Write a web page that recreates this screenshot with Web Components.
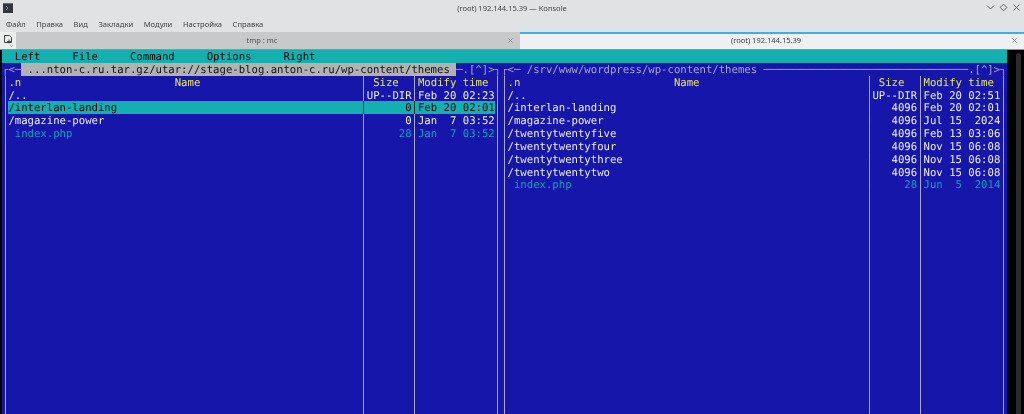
<!DOCTYPE html>
<html lang="ru">
<head>
<meta charset="utf-8">
<title>Konsole</title>
<style>
  html, body { margin: 0; padding: 0; background: #000; }
</style>
</head>
<body>
<kde-window>
  <kde-titlebar>(root) 192.144.15.39 — Konsole</kde-titlebar>
  <kde-menubar>
    <span>Файл</span><span>Правка</span><span>Вид</span><span>Закладки</span><span>Модули</span><span>Настройка</span><span>Справка</span>
  </kde-menubar>
  <kde-tabbar>
    <kde-tab>tmp : mc</kde-tab>
    <kde-tab active>(root) 192.144.15.39</kde-tab>
  </kde-tabbar>
  <mc-terminal>
    <mc-menu></mc-menu>
    <mc-panel cols="55" active>
      <span slot="path"> ...nton-c.ru.tar.gz/utar://stage-blog.anton-c.ru/wp-content/themes </span>
      <mc-row header name=".n                        Name" size=" Size" time="Modify time"></mc-row>
      <mc-row name="/.." size="UP--DIR" time="Feb 20 02:23"></mc-row>
      <mc-row selected name="/interlan-landing" size="0" time="Feb 20 02:01"></mc-row>
      <mc-row name="/magazine-power" size="0" time="Jan  7 03:52"></mc-row>
      <mc-row link name=" index.php" size="28" time="Jan  7 03:52"></mc-row>
      <mc-row filler></mc-row>
    </mc-panel>
    <mc-panel cols="56">
      <span slot="path"> /srv/www/wordpress/wp-content/themes </span>
      <mc-row header name=".n                        Name" size=" Size" time="Modify time"></mc-row>
      <mc-row name="/.." size="UP--DIR" time="Feb 20 02:51"></mc-row>
      <mc-row name="/interlan-landing" size="4096" time="Feb 20 02:01"></mc-row>
      <mc-row name="/magazine-power" size="4096" time="Jul 15  2024"></mc-row>
      <mc-row name="/twentytwentyfive" size="4096" time="Feb 13 03:06"></mc-row>
      <mc-row name="/twentytwentyfour" size="4096" time="Nov 15 06:08"></mc-row>
      <mc-row name="/twentytwentythree" size="4096" time="Nov 15 06:08"></mc-row>
      <mc-row name="/twentytwentytwo" size="4096" time="Nov 15 06:08"></mc-row>
      <mc-row link name=" index.php" size="28" time="Jun  5  2014"></mc-row>
      <mc-row filler></mc-row>
    </mc-panel>
  </mc-terminal>
</kde-window>

<script>
class KdeWindow extends HTMLElement {
  constructor() {
    super();
    this.attachShadow({ mode: "open" });
    this.shadowRoot.innerHTML = `
      <style>
        :host {
          display: flex;
          flex-direction: column;
          width: 1024px;
          height: 414px;
          overflow: hidden;
          background: #e1e2e4;
          font-family: "Noto Sans", sans-serif;
          color: #404346;
          filter: blur(0.3px); /* the reference is a scaled down capture */
        }
      </style>
      <slot></slot>
    `;
  }
}

class KdeTitlebar extends HTMLElement {
  constructor() {
    super();
    this.attachShadow({ mode: "open" });
    this.shadowRoot.innerHTML = `
      <style>
        :host {
          display: grid;
          grid-template-columns: 1fr auto 1fr;
          align-items: center;
          height: 15px;
          padding: 0 3px;
          font-size: 7.5px;
        }
        .controls { display: flex; gap: 4px; justify-self: end; }
        svg { display: block; }
      </style>
      <svg class="app" width="10" height="10" viewBox="0 0 10 10">
        <rect width="10" height="10" fill="#33373b"/>
        <rect x="0" y="0" width="10" height="1" fill="#666a6e"/>
        <path d="M3 3l2 2-2 2" fill="none" stroke="#8b9094" stroke-width="1"/>
      </svg>
      <span class="title"><slot></slot></span>
      <div class="controls">
        <svg width="9" height="9" viewBox="0 0 9 9"><path d="M1 2.5l3.5 3.5L8 2.5" fill="none" stroke="#5b5e61" stroke-width="1"/></svg>
        <svg width="9" height="9" viewBox="0 0 9 9"><path d="M4.5 1.2L7.8 4.5 4.5 7.8 1.2 4.5z" fill="none" stroke="#5b5e61" stroke-width="1"/></svg>
        <svg width="9" height="9" viewBox="0 0 9 9"><path d="M1.5 1.5l6 6M7.5 1.5l-6 6" fill="none" stroke="#5b5e61" stroke-width="1"/></svg>
      </div>
    `;
  }
}

class KdeMenubar extends HTMLElement {
  constructor() {
    super();
    this.attachShadow({ mode: "open" });
    this.shadowRoot.innerHTML = `
      <style>
        :host {
          display: flex;
          align-items: center;
          gap: 10.6px;
          height: 17px;
          padding-left: 6px;
          font-size: 7.6px;
        }
        ::slotted(span) { display: block; }
      </style>
      <slot></slot>
    `;
  }
}

class KdeTabbar extends HTMLElement {
  constructor() {
    super();
    this.attachShadow({ mode: "open" });
    this.shadowRoot.innerHTML = `
      <style>
        :host {
          display: flex;
          height: 18px;
          box-sizing: border-box;
          border-bottom: 1px solid #8e9092;
          background: #e1e2e4;
        }
        .new {
          flex: none;
          width: 16px;
          display: flex;
          align-items: center;
          justify-content: center;
          background: #eceded;
        }
        svg { display: block; }
      </style>
      <div class="new">
        <svg width="11" height="13" viewBox="0 0 11 13">
          <path d="M1.5 1.5h5l2 2v5h-7z" fill="none" stroke="#44474a" stroke-width="1"/>
          <path d="M6 5.5v4M4 7.5h4" stroke="#44474a" stroke-width="1"/>
          <path d="M7.5 11.5l1 1 1-1" fill="none" stroke="#6d7073" stroke-width=".8"/>
        </svg>
      </div>
      <slot></slot>
    `;
  }
}

class KdeTab extends HTMLElement {
  constructor() {
    super();
    this.attachShadow({ mode: "open" });
    this.shadowRoot.innerHTML = `
      <style>
        :host {
          flex: 1;
          display: flex;
          align-items: center;
          box-sizing: border-box;
          padding: 0 7px 1px 0;
          background: #c8c9ca;
          font-size: 7.5px;
          color: #4e5154;
        }
        :host([active]) {
          flex: 0 0 504px;
          background: #eff0f1;
          border-top: 2px solid #3daee9;
          padding-bottom: 3px;
          color: #3a3d40;
        }
        .label { flex: 1; text-align: center; }
        svg { display: block; flex: none; }
      </style>
      <span class="label"><slot></slot></span>
      <svg width="5" height="5" viewBox="0 0 5 5"><path d="M.5.5l4 4M4.5.5l-4 4" stroke="#8d8f91" stroke-width="1"/></svg>
    `;
  }
}

class McTerminal extends HTMLElement {
  constructor() {
    super();
    this.attachShadow({ mode: "open" });
    this.shadowRoot.innerHTML = `
      <style>
        :host {
          flex: 1;
          min-height: 0;
          display: flex;
          background: #000;
          padding-left: 2px;
          --c: 6.4px;
          --r: 12.85px;
          --blue: #1616ab;
          --teal: #14b0b0;
          --line: #a8a8c8;
          font-family: "DejaVu Sans Mono", monospace;
          font-size: 10.63px;
          text-rendering: geometricPrecision;
        }
        .screen {
          flex: none;
          width: calc(var(--c) * 157);
          display: grid;
          grid-template-columns: calc(var(--c) * 78) calc(var(--c) * 79);
          grid-template-rows: var(--r) 1fr;
          background: var(--blue);
        }
        .screen ::slotted(mc-menu) { grid-column: 1 / 3; }
        .track { flex: 1; display: flex; justify-content: flex-end; padding: 3px 3px 0 0; }
        .pill { width: 5px; border-radius: 3px 3px 0 0; background: #2b2b2b; }
      </style>
      <div class="screen"><slot></slot></div>
      <div class="track"><div class="pill"></div></div>
    `;
  }
}

class McMenu extends HTMLElement {
  constructor() {
    super();
    this.attachShadow({ mode: "open" });
    this.shadowRoot.innerHTML = `
      <style>
        :host {
          display: block;
          height: var(--r);
          line-height: 14.4px;
          background: var(--teal);
          color: #000;
        }
        span { white-space: pre; }
      </style>
      <span>  Left     File     Command     Options     Right</span>
    `;
  }
}

class McPanel extends HTMLElement {
  constructor() {
    super();
    this.attachShadow({ mode: "open" });
    const cols = Number(this.getAttribute("cols"));
    const path = this.querySelector('[slot="path"]').textContent;
    // total width is name cols + 23, the frame line fills what the path leaves over
    const fill = "─".repeat(cols + 23 - 3 - path.length - 6);
    this.style.setProperty("--name", cols);
    this.shadowRoot.innerHTML = `
      <style>
        :host {
          display: flex;
          flex-direction: column;
          min-height: 0;
          color: var(--line);
        }
        .title {
          height: var(--r);
          line-height: 14.4px;
          white-space: pre;
          flex: none;
        }
        :host([active]) ::slotted([slot="path"]) { background: #b2b2b2; color: #111; }
        ::slotted(mc-row[filler]) { flex: 1; }
      </style>
      <div class="title">┌&lt;─<slot name="path"></slot>${fill}.[^]&gt;┐</div>
      <slot></slot>
    `;
  }
}

class McRow extends HTMLElement {
  constructor() {
    super();
    this.attachShadow({ mode: "open" });
    const attr = (n) => this.getAttribute(n) || "";
    this.shadowRoot.innerHTML = `
      <style>
        :host {
          display: grid;
          grid-template-columns:
            var(--c) calc(var(--c) * var(--name)) var(--c)
            calc(var(--c) * 7) var(--c) calc(var(--c) * 12) var(--c);
          min-height: var(--r);
          color: #eeeef8;
        }
        :host([header]) { color: #e8e860; }
        :host([link]) { color: #14a0b0; }
        :host([selected]) { color: #000; }
        .cell { height: var(--r); line-height: 14.4px; white-space: pre; }
        .sep { background: linear-gradient(var(--line), var(--line)) center / 1px 100% no-repeat; }
        :host([selected]) .cell { background: var(--teal); }
        :host([selected]) .sep.in {
          background: linear-gradient(#0a2a30, #0a2a30) center / 1px 100% no-repeat, var(--teal);
        }
        .size { text-align: right; }
        :host([header]) .size { text-align: left; }
      </style>
      <div class="sep"></div>
      <div class="cell">${attr("name")}</div>
      <div class="sep in"></div>
      <div class="cell size">${attr("size")}</div>
      <div class="sep in"></div>
      <div class="cell">${attr("time")}</div>
      <div class="sep"></div>
    `;
  }
}

customElements.define("kde-window", KdeWindow);
customElements.define("kde-titlebar", KdeTitlebar);
customElements.define("kde-menubar", KdeMenubar);
customElements.define("kde-tabbar", KdeTabbar);
customElements.define("kde-tab", KdeTab);
customElements.define("mc-terminal", McTerminal);
customElements.define("mc-menu", McMenu);
customElements.define("mc-panel", McPanel);
customElements.define("mc-row", McRow);
</script>
</body>
</html>
